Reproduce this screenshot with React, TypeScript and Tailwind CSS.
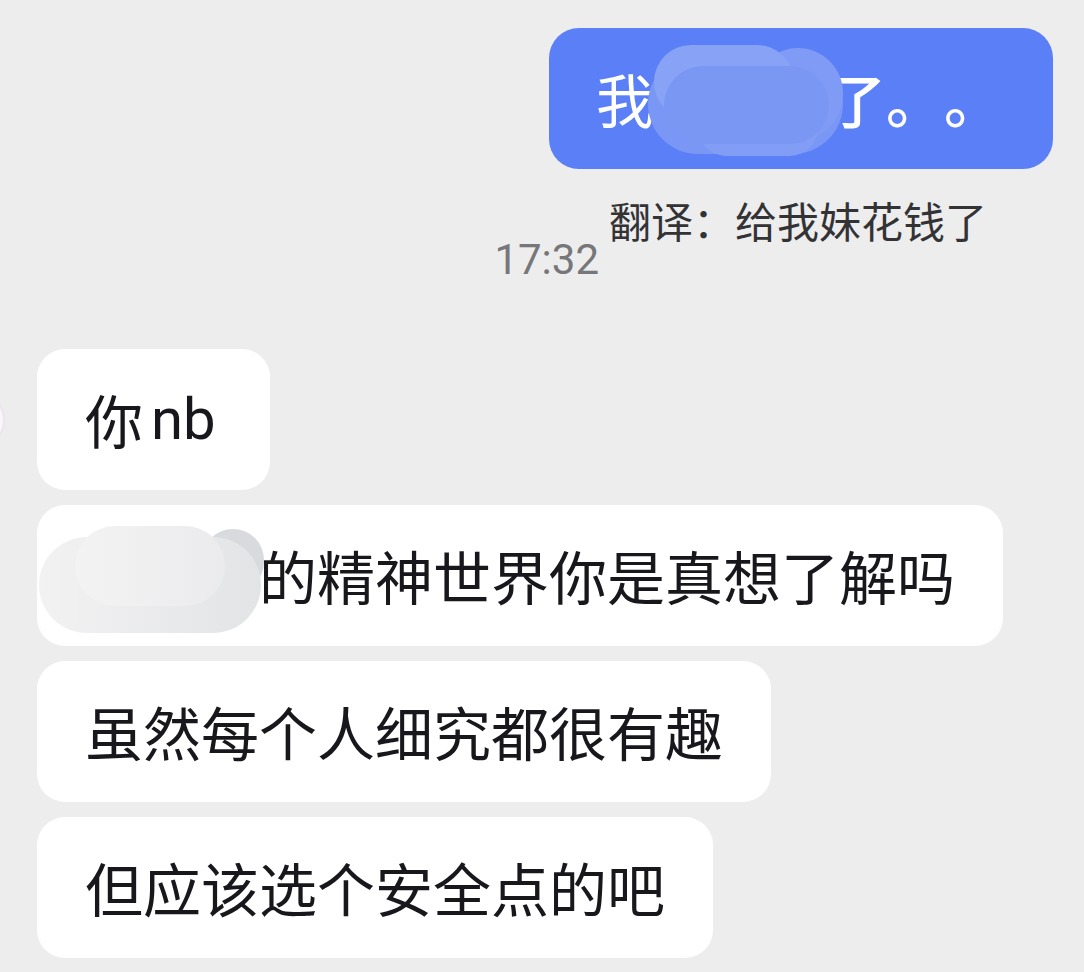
const CJK = "font-['Noto_Sans_CJK_SC','Roboto',sans-serif]";
const LATIN = "font-['Roboto','Noto_Sans_CJK_SC',sans-serif]";

const INCOMING = [
  "虽然每个人细究都很有趣",
  "但应该选个安全点的吧",
];

export default function App() {
  return (
    <div className={`min-h-screen w-full overflow-hidden bg-[#ededed] pt-[28px] [text-spacing-trim:space-all] ${CJK}`}>
      <OutgoingBubble />
      <MetaRow />
      <div className="mt-[64px] flex flex-col gap-[15px]">
        <div className="flex items-center">
          <div className="-ml-[45px] mr-[32px] h-[52px] w-[50px] shrink-0 rounded-full border-2 border-[#ece4ef] bg-[#f8f6f9]" />
          <Bubble>
            <span>你</span>
            <span className={`${LATIN} pl-[8px] pr-[6px]`}>nb</span>
          </Bubble>
        </div>
        <div className="pl-[37px]">
          <Bubble>
            <GreyBlob />
            <span>的精神世界你是真想了解吗</span>
          </Bubble>
        </div>
        {INCOMING.map((text) => (
          <div key={text} className="pl-[37px]">
            <Bubble>
              <span>{text}</span>
            </Bubble>
          </div>
        ))}
      </div>
    </div>
  );
}

function Bubble({ children }: { children: React.ReactNode }) {
  return (
    <div className="inline-flex items-center rounded-[28px] bg-white px-[48px] py-[28px] text-[58px] leading-[85px] text-[#17171c]">
      {children}
    </div>
  );
}

function OutgoingBubble() {
  return (
    <div className="flex justify-end pr-[31px]">
      <div className="flex items-center rounded-[30px] bg-[#5a7ff6] pl-[47px] pr-[51px] py-[28px] text-[58px] leading-[85px] text-white">
        <span>我</span>
        <BlueBlob />
        <span className="font-medium">了。。</span>
      </div>
    </div>
  );
}

function MetaRow() {
  return (
    <div className="mt-[21px] flex items-start justify-end pr-[97px]">
      <span className={`${LATIN} mt-[45px] mr-[10px] text-[42px] leading-[50px] text-[#76767b]`}>
        17:32
      </span>
      <span className="text-[42px] leading-[60px] text-[#333336]">
        翻译：给我妹花钱了
      </span>
    </div>
  );
}

function BlueBlob() {
  return (
    <span className="relative block h-[85px] w-[174px] shrink-0">
      <span className="absolute left-[-6px] top-[-2px] h-[100px] w-[195px] rounded-[50px] bg-[#7b97f5]" />
      <span className="absolute left-[99px] top-[-8px] h-[92px] w-[90px] rounded-full bg-[#7f9bf5]" />
      <span className="absolute left-[0px] top-[-11px] h-[74px] w-[140px] rounded-full bg-[#88a3f6]" />
      <span className="absolute left-[44px] top-[44px] h-[56px] w-[120px] rounded-full bg-[#829df5]" />
      <span className="absolute left-[10px] top-[10px] h-[78px] w-[165px] rounded-[40px] bg-[#7a97f4]" />
    </span>
  );
}

function GreyBlob() {
  return (
    <span className="relative block h-[85px] w-[174px] shrink-0">
      <span className="absolute left-[117px] top-[-4px] h-[64px] w-[62px] rounded-full bg-[#d9dade]" />
      <span className="absolute left-[-46px] top-[4px] h-[96px] w-[222px] rounded-[48px] bg-gradient-to-r from-[#f2f2f3] to-[#e3e4e6]" />
      <span className="absolute left-[-10px] top-[-7px] h-[80px] w-[150px] rounded-full bg-gradient-to-r from-[#f3f3f4] to-[#ebebed]" />
    </span>
  );
}
